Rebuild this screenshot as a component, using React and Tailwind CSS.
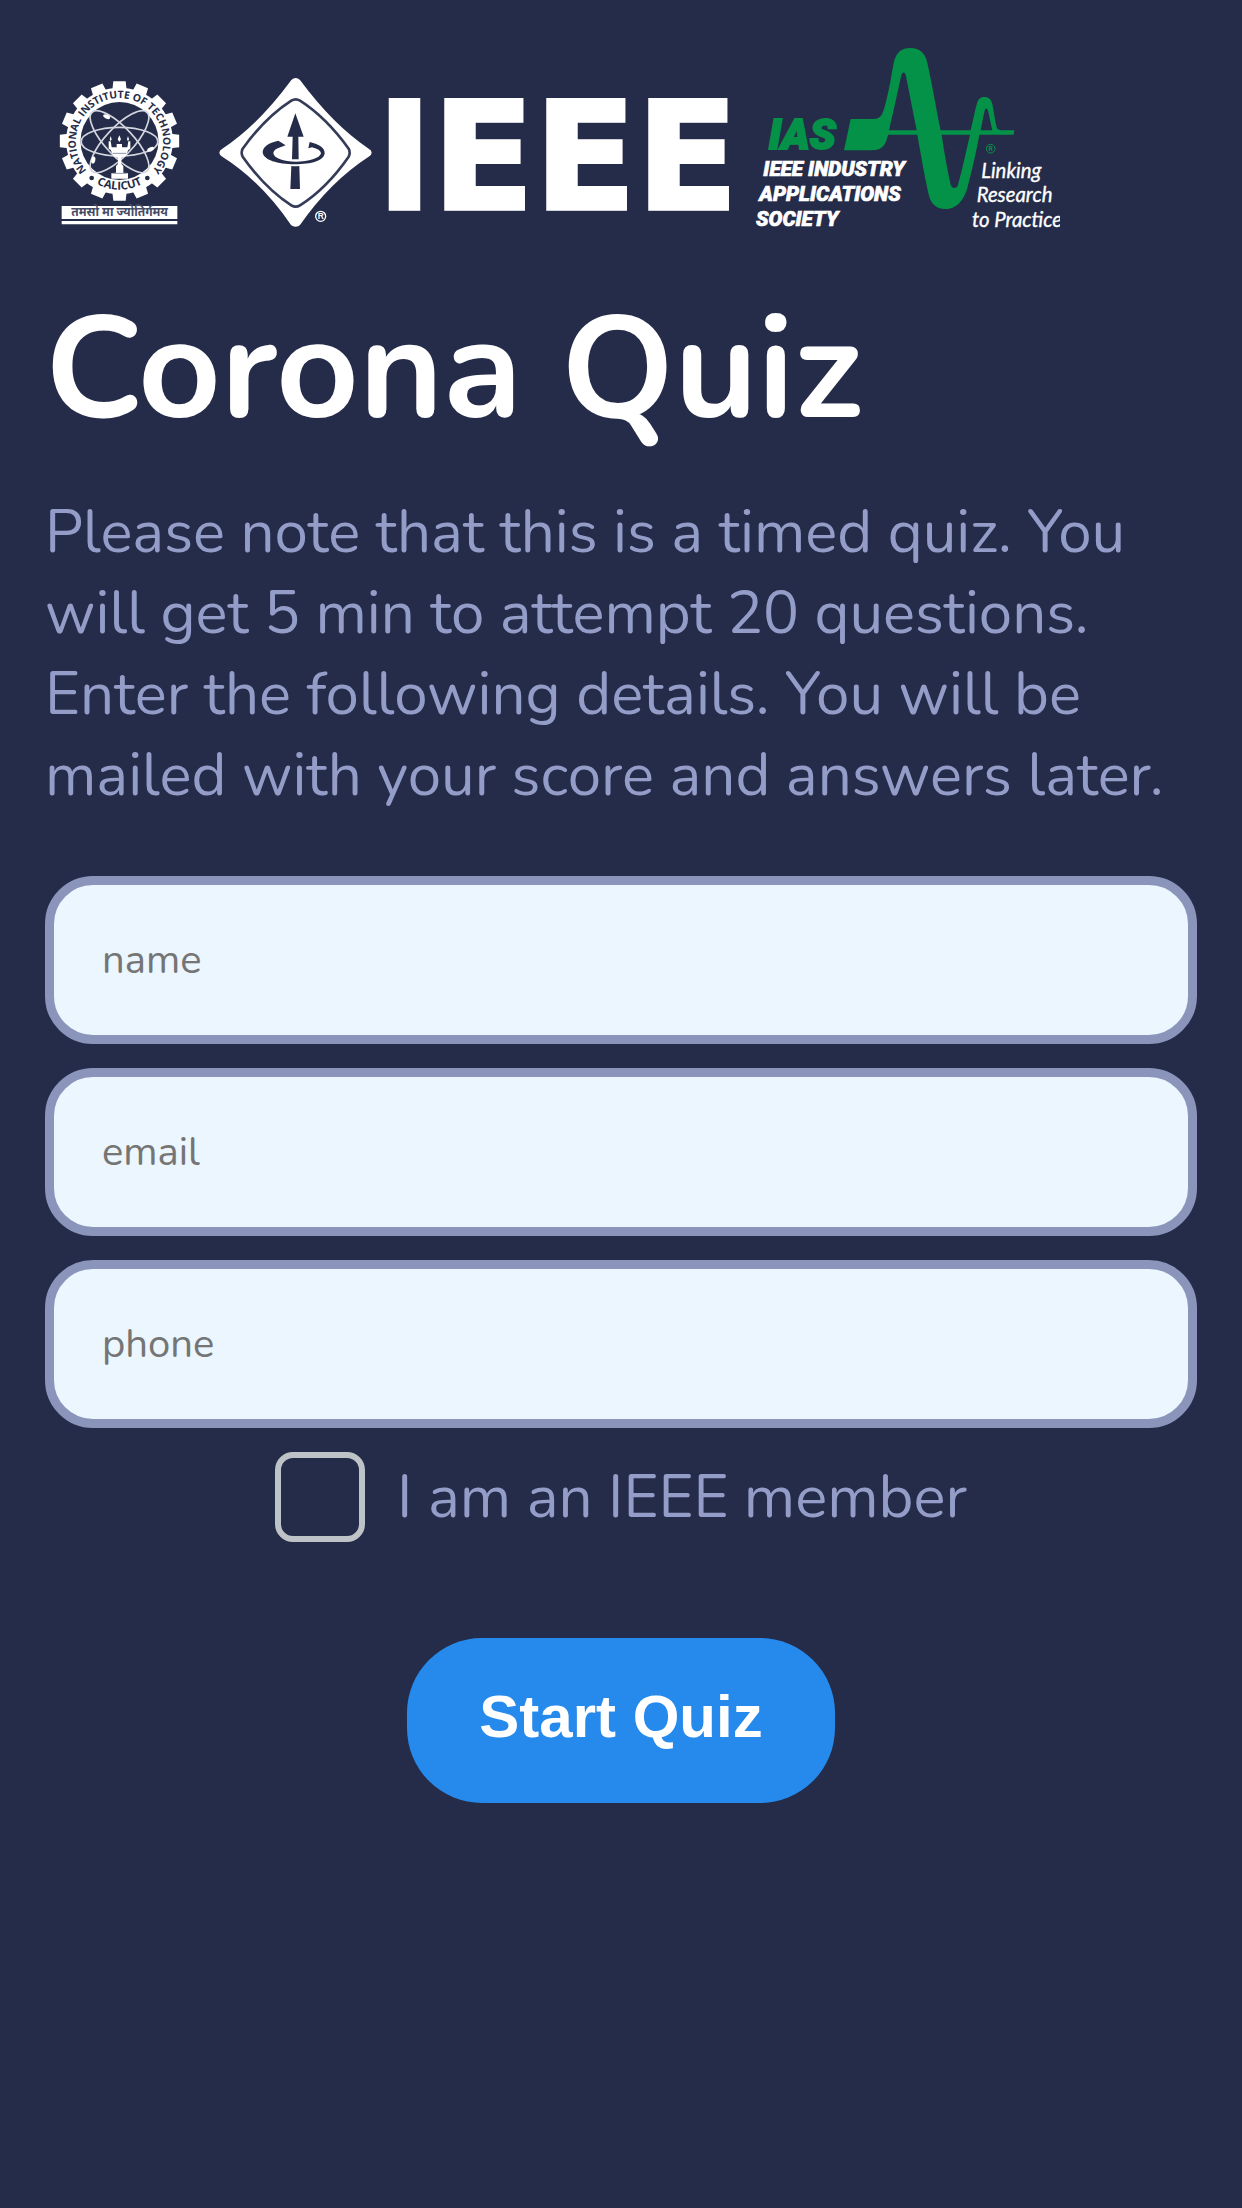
const GEAR_TEETH = Array.from({ length: 16 }, (_, i) => i * 22.5);

function InstituteLogo() {
  return (
    <svg viewBox="15 -45 450 549" className="w-[150px] shrink-0" role="img" aria-label="National Institute of Technology Calicut">
      <g fill="#fff">
        {GEAR_TEETH.map((a) => (
          <path key={a} d="M217 90L220 64h37l3 26z" transform={`rotate(${a} 238.5 243)`} />
        ))}
        <circle cx="238.5" cy="243" r="160" />
      </g>
      <circle cx="238.5" cy="243" r="117" fill="#252c49" />
      <g fill="none" stroke="#d3d5df" strokeWidth="5">
        <ellipse cx="238.5" cy="245" rx="115" ry="43" />
        <ellipse cx="238.5" cy="245" rx="121" ry="42" transform="rotate(47 238.5 245)" />
        <ellipse cx="238.5" cy="245" rx="121" ry="42" transform="rotate(-47 238.5 245)" />
      </g>
      <g fill="#fff">
        <ellipse cx="200" cy="170" rx="11" ry="6" transform="rotate(25 200 170)" />
        <ellipse cx="332" cy="268" rx="11" ry="6" transform="rotate(-25 332 268)" />
        <ellipse cx="160" cy="300" rx="6" ry="11" transform="rotate(10 160 300)" />
        <path d="M206 244h6l3 18h15v-10h16v10h16l3-18h6v22l-6 4-8 18-13 6v18l6 6v20l14 2v16h-50v-16l14-2v-20l6-6v-18l-14-6-8-18-6-4z" />
        <path d="M238 226l5 12-5 8-5-8zM212 228l3 10-3 6-3-6zM264 228l3 10-3 6-3-6z" />
      </g>
      <path d="M218 280h40M218 340h42" stroke="#8d92a8" strokeWidth="3" />
      <g fill="#252c49" fontFamily="'Open Sans', 'Liberation Sans', sans-serif" fontWeight="700">
        <path id="seal-ring" d="M137 328A131 131 0 1 1 340 328" fill="none" />
        <path id="seal-base" d="M92.5 243A146 146 0 0 0 384.500 243" fill="none" />
        <text fontSize="31">
          <textPath href="#seal-ring" startOffset="50%" textAnchor="middle">NATIONAL INSTITUTE OF TECHNOLOGY</textPath>
        </text>
        <text fontSize="34">
          <textPath href="#seal-base" startOffset="50%" textAnchor="middle">CALICUT</textPath>
        </text>
        <circle cx="155" cy="354" r="7" />
        <circle cx="322" cy="354" r="7" />
      </g>
      <path d="M65 438h347v39H65zM65 483h347v10H65z" fill="#fff" />
      <text x="239" y="469" textAnchor="middle" fontSize="36" fontWeight="700" fill="#454b66" fontFamily="'Noto Sans Devanagari', 'Noto Sans', sans-serif">
        तमसो मा ज्योतिर्गमय
      </text>
    </svg>
  );
}

function IeeeLogo() {
  return (
    <svg viewBox="30 -45 1590 549" className="w-[530px] shrink-0" role="img" aria-label="IEEE">
      <path d="M274 60Q280 54 287 54T300 60Q400 195 506 266Q515 271 515 278T506 290Q390 365 300 495Q296 500 287 500T273 495Q185 365 67 290Q58 285 58 278T67 266Q175 195 274 60z" fill="#fff" />
      <path d="M274 122Q287 114 300 122Q378 172 446 266Q452 278 446 290Q380 385 300 436Q287 444 274 436Q195 385 128 290Q122 278 128 266Q196 172 274 122z" fill="none" stroke="#353c58" strokeWidth="8" />
      <g fill="#252c49">
        <path d="M286 160L311 230H295L296 298H276L278 230H262z" />
        <path d="M274 318Q286 320 298 318L300 387H271z" />
        <path d="M235 242L257 256L241 262Q220 268 220 280C222 295 250 305 288 305S360 295 363 280Q362 268 336 262L325 265L329 246Q374 256 374 280C372 302 335 313 284 313S190 300 188 277Q188 253 235 242z" />
      </g>
      <circle cx="362" cy="469" r="15" fill="none" stroke="#fff" strokeWidth="4" />
      <text x="362" y="478" textAnchor="middle" fontSize="25" fontWeight="700" fill="#fff" fontFamily="'Liberation Sans', sans-serif">R</text>
      <text x="530" y="448" fontSize="448" fontWeight="700" fill="#fff" stroke="#fff" strokeWidth="10" fontFamily="'DejaVu Sans', sans-serif">IEEE</text>
    </svg>
  );
}

function SocietyLogo() {
  return (
    <svg viewBox="45 15 915 549" className="w-[305px] shrink-0" role="img" aria-label="IEEE Industry Applications Society, Linking Research to Practice">
      <path
        d="M332 237H400C422 237 428 222 434 200C448 150 455 100 462 65C470 35 486 24 511 24C540 24 556 40 562 68C580 150 590 215 602 271H692C700 240 705 210 711 190C715 176 722 171 734 171C747 171 753 178 757 192C762 215 764 240 770 262C772 269 777 271 784 271H823L821 284H718C708 340 695 395 685 432C675 475 655 507 617 507C585 507 572 490 565 460C552 400 542 340 532 284H444C438 312 430 330 395 331H312zM447 271H530C518 210 508 160 498 108C495 94 487 94 484 106C470 170 458 225 447 271zM605 284C613 340 622 390 632 434C636 447 650 447 654 434C668 385 679 330 690 284zM722 271H757C752 250 748 228 744 212C741 203 736 203 734 212C729 232 726 252 722 271z"
        fill="#049148"
        fillRule="evenodd"
      />
      <g fill="#049148" fontFamily="Roboto, 'Liberation Sans', sans-serif">
        <text x="86" y="328" fontSize="128" fontWeight="900" fontStyle="italic" stroke="#049148" strokeWidth="6">IAS</text>
        <text x="752" y="334" fontSize="20" fontWeight="700" textAnchor="middle">R</text>
      </g>
      <circle cx="752" cy="326" r="13" fill="none" stroke="#049148" strokeWidth="3" />
      <g fill="#fff" stroke="#fff" strokeWidth="2" fontFamily="Roboto, 'Liberation Sans', sans-serif" fontWeight="900" fontStyle="italic" fontSize="62">
        <text x="70" y="409">IEEE INDUSTRY</text>
        <text x="58" y="483">APPLICATIONS</text>
        <text x="48" y="557">SOCIETY</text>
      </g>
      <g fill="#fff" stroke="#fff" strokeWidth="1" fontFamily="Lato, 'Open Sans', sans-serif" fontStyle="italic" fontSize="61">
        <text x="724" y="413">Linking</text>
        <text x="710" y="486">Research</text>
        <text x="696" y="560">to Practice</text>
      </g>
    </svg>
  );
}

const FIELDS = [
  { id: "name", type: "text" },
  { id: "email", type: "email" },
  { id: "phone", type: "tel" },
];

export default function App() {
  return (
    <main className="min-h-screen bg-[#252c49] px-[45px] pt-[45px] font-[Nunito,'Noto_Sans',sans-serif] text-[60px] leading-[81px] text-[#949dc8]">
      <header className="flex gap-[15px]">
        <InstituteLogo />
        <IeeeLogo />
        <SocietyLogo />
      </header>
      <h1 className="mt-11 text-[144px] leading-[196px] font-bold text-white">Corona Quiz</h1>
      <p className="mt-6">
        Please note that this is a timed quiz. You will get 5 min to attempt 20 questions. Enter the following details. You will be mailed with your score and answers later.
      </p>
      <form className="mt-[60px] flex flex-col gap-6 pb-12">
        {FIELDS.map((f) => (
          <input
            key={f.id}
            type={f.type}
            name={f.id}
            aria-label={f.id}
            placeholder={f.id}
            className="h-[168px] w-full rounded-[48px] border-[9px] border-[#8b94bb] bg-[#ebf6ff] px-12 text-[40px] text-gray-900 placeholder:text-[#757575]"
          />
        ))}
        <label className="flex items-center justify-center gap-8">
          <input type="checkbox" name="member" className="size-[90px] appearance-none rounded-[18px] border-[6px] border-[#bdc3c7] checked:bg-[#268aec]" />
          I am an IEEE member
        </label>
        <button type="button" className="mt-[72px] h-[165px] self-center rounded-[75px] bg-[#268aec] px-[72px] pb-2 font-['Liberation_Sans',sans-serif] font-bold text-white">
          Start Quiz
        </button>
      </form>
    </main>
  );
}
